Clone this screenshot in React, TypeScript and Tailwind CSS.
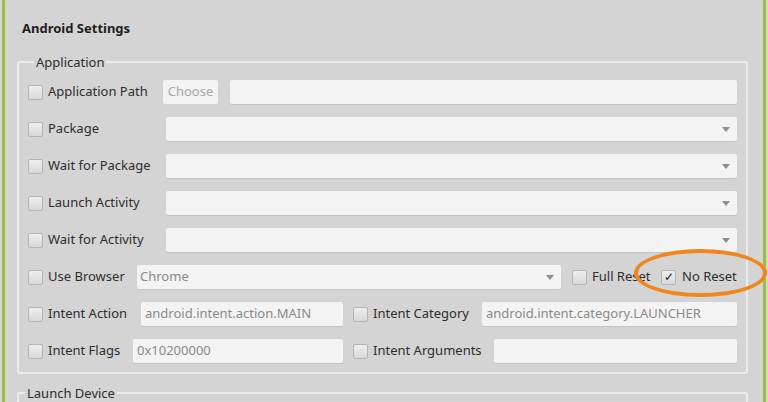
import type { ReactNode } from 'react';

const font = { fontFamily: '"Noto Sans", "Open Sans", Arial, sans-serif' };

function Check({ checked = false }: { checked?: boolean }) {
  return (
    <span className="flex h-[15px] w-[15px] shrink-0 items-center justify-center rounded-[2px] border border-[#b5b5b5] bg-gradient-to-b from-[#eeeeee] to-[#d8d8d8] text-[12px] leading-none text-[#222]">
      {checked ? '✓' : null}
    </span>
  );
}

function Label({ children, className = '' }: { children: ReactNode; className?: string }) {
  return <span className={`shrink-0 whitespace-nowrap text-[13px] text-[#2e2e2e] ${className}`}>{children}</span>;
}

function Field({ value = '', className = '' }: { value?: string; className?: string }) {
  return (
    <div
      className={`flex h-[24px] items-center rounded-[2px] bg-[#f3f3f3] pl-[4px] text-[13px] text-[#8a8a8a] shadow-[0_1px_0_#c4c4c4] ${className}`}
    >
      {value}
    </div>
  );
}

function Select({ value = '', className = '' }: { value?: string; className?: string }) {
  return (
    <div
      className={`flex h-[24px] items-center justify-between rounded-[2px] bg-[#f3f3f3] pl-[3px] pr-[7px] text-[13px] text-[#8a8a8a] shadow-[0_1px_0_#c4c4c4] ${className}`}
    >
      <span>{value}</span>
      <svg width="8" height="5" viewBox="0 0 8 5">
        <path d="M0 0h8L4 5z" fill="#8e8e8e" />
      </svg>
    </div>
  );
}

function Row({ children }: { children: ReactNode }) {
  return <div className="flex h-[24px] items-center">{children}</div>;
}

export default function App() {
  return (
    <div className="relative h-[402px] w-[768px] overflow-hidden bg-[#d6d6d6]" style={font}>
      <div className="mx-[2px] -mt-[10px] h-[430px] rounded-[12px] border-[3px] border-[#9dc03c] bg-[#d4d4d4] pt-[10px]">
        <h1 className="pl-[17px] pt-[16px] text-[13px] font-bold leading-[18px] text-[#1e1e1e]">Android Settings</h1>

        <fieldset className="ml-[12px] mr-[15px] mt-[16px] rounded-[3px] border-2 border-[#ececec] pb-[9px] pl-[9px] pr-[9px]">
          <legend className="ml-[6px] px-[2px] text-[13px] leading-[18px] text-[#2e2e2e]">Application</legend>
          <div className="flex flex-col gap-[13px] pt-[9px]">
            <Row>
              <Check />
              <Label className="ml-[5px] w-[115px]">Application Path</Label>
              <div className="flex h-[24px] w-[55px] items-center justify-center rounded-[2px] bg-[#f3f3f3] text-[13px] text-[#a8a8a8]">
                Choose
              </div>
              <Field className="ml-[12px] flex-1" />
            </Row>
            <Row>
              <Check />
              <Label className="ml-[5px] w-[118px]">Package</Label>
              <Select className="flex-1" />
            </Row>
            <Row>
              <Check />
              <Label className="ml-[5px] w-[118px]">Wait for Package</Label>
              <Select className="flex-1" />
            </Row>
            <Row>
              <Check />
              <Label className="ml-[5px] w-[118px]">Launch Activity</Label>
              <Select className="flex-1" />
            </Row>
            <Row>
              <Check />
              <Label className="ml-[5px] w-[118px]">Wait for Activity</Label>
              <Select className="flex-1" />
            </Row>
            <Row>
              <Check />
              <Label className="ml-[5px] w-[89px]">Use Browser</Label>
              <Select value="Chrome" className="flex-1" />
              <span className="ml-[11px]">
                <Check />
              </span>
              <Label className="ml-[5px] w-[69px]">Full Reset</Label>
              <Check checked />
              <Label className="ml-[6px] w-[55px]">No Reset</Label>
            </Row>
            <Row>
              <Check />
              <Label className="ml-[5px] w-[93px]">Intent Action</Label>
              <Field value="android.intent.action.MAIN" className="w-[202px]" />
              <span className="ml-[10px]">
                <Check />
              </span>
              <Label className="ml-[5px] w-[109px]">Intent Category</Label>
              <Field value="android.intent.category.LAUNCHER" className="flex-1" />
            </Row>
            <Row>
              <Check />
              <Label className="ml-[5px] w-[85px]">Intent Flags</Label>
              <Field value="0x10200000" className="w-[210px]" />
              <span className="ml-[10px]">
                <Check />
              </span>
              <Label className="ml-[5px] w-[121px]">Intent Arguments</Label>
              <Field className="flex-1" />
            </Row>
          </div>
        </fieldset>

        <fieldset className="ml-[12px] mr-[15px] mt-[10px] h-[60px] rounded-[3px] border-2 border-[#ececec]">
          <legend className="ml-[6px] px-[2px] text-[13px] leading-[18px] text-[#2e2e2e]">Launch Device</legend>
        </fieldset>
      </div>

      {/* annotation ring round "No Reset" */}
      <div className="absolute left-[634px] top-[249px] h-[48px] w-[133px] rounded-[50%] border-4 border-[#f0861e]" />
    </div>
  );
}
